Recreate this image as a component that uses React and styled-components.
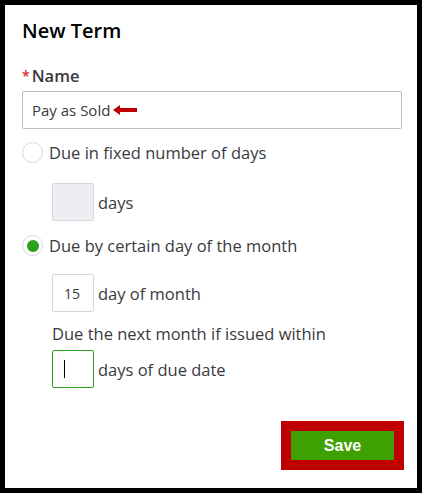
import React from 'react';
import styled, { createGlobalStyle } from 'styled-components';

const GlobalStyle = createGlobalStyle`
  html, body {
    margin: 0;
    padding: 0;
    background: #000;
  }
  body {
    font-family: "Open Sans", "Liberation Sans", sans-serif;
  }
`;

const Frame = styled.div`
  width: 422px;
  height: 493px;
  box-sizing: border-box;
  border: 5px solid #000;
  background: #fff;
  display: flex;
  flex-direction: column;
  padding: 14px 15px 18px 17px;
  color: #393a3d;
`;

const Title = styled.h2`
  margin: 0;
  font-size: 20px;
  font-weight: 600;
  color: #000;
  line-height: 24px;
`;

const Label = styled.div`
  margin-top: 23px;
  font-size: 16.5px;
  font-weight: 600;
  color: #393a3d;
  line-height: 20px;
  display: flex;
  align-items: center;
  span {
    color: #d52b1e;
    margin-right: 2px;
    font-size: 14px;
  }
`;

const NameField = styled.div`
  margin-top: 5px;
  height: 38px;
  box-sizing: border-box;
  border: 1px solid #babec5;
  border-radius: 2px;
  display: flex;
  align-items: center;
  padding: 0 9px;
  font-size: 15px;
  color: #393a3d;
  gap: 3px;
`;

const RadioRow = styled.label`
  display: flex;
  align-items: center;
  gap: 6px;
  margin-top: ${(p) => p.top}px;
  font-size: 16.5px;
  line-height: 21px;
  font-weight: 500;
  color: #393a3d;
`;

const Radio = styled.span`
  width: 21px;
  height: 21px;
  box-sizing: border-box;
  border-radius: 50%;
  border: 1px solid #d4d7dc;
  background: #fff;
  display: flex;
  align-items: center;
  justify-content: center;
  flex-shrink: 0;
  &::after {
    content: '';
    display: ${(p) => (p.checked ? 'block' : 'none')};
    width: 12px;
    height: 12px;
    border-radius: 50%;
    background: #2ca01c;
  }
`;

const Indent = styled.div`
  padding-left: 30px;
  margin-top: ${(p) => p.top}px;
`;

const FieldRow = styled.div`
  display: flex;
  align-items: center;
  gap: 4px;
  font-size: 16.5px;
  color: #393a3d;
`;

const SmallBox = styled.div`
  width: 42px;
  height: 38px;
  box-sizing: border-box;
  border: 1px solid ${(p) => (p.focus ? '#2ca01c' : '#d4d7dc')};
  border-radius: 2px;
  background: ${(p) => (p.disabled ? '#eceef1' : '#fff')};
  display: flex;
  align-items: center;
  padding-left: 11px;
  font-size: 14px;
  color: #393a3d;
`;

const SubLabel = styled.div`
  margin-top: 12px;
  margin-bottom: 6px;
  font-size: 16.5px;
  line-height: 20px;
  font-weight: 500;
  color: #393a3d;
`;

const Cursor = styled.span`
  display: block;
  width: 1px;
  height: 18px;
  background: #000;
`;

const Footer = styled.div`
  margin-top: auto;
  display: flex;
  justify-content: flex-end;
`;

const SaveButton = styled.button`
  width: 123px;
  height: 49px;
  box-sizing: border-box;
  border: 10px solid #c00000;
  background: #3fa004;
  color: #fff;
  font-family: "Liberation Sans", Arial, sans-serif;
  font-weight: 700;
  font-size: 16px;
  padding: 0;
  margin-right: -2px;
`;

const Arrow = () => (
  <svg width="24" height="10" viewBox="0 0 24 10">
    <polygon points="0,5 7,0 7,3 24,3 24,7 7,7 7,10" fill="#c00000" />
  </svg>
);

export default function App() {
  return (
    <>
      <GlobalStyle />
      <Frame>
        <Title>New Term</Title>
        <Label>
          <span>*</span>Name
        </Label>
        <NameField>
          Pay as Sold <Arrow />
        </NameField>
        <RadioRow top={13}>
          <Radio />
          Due in fixed number of days
        </RadioRow>
        <Indent top={20}>
          <FieldRow>
            <SmallBox disabled />
            days
          </FieldRow>
        </Indent>
        <RadioRow top={14}>
          <Radio checked />
          Due by certain day of the month
        </RadioRow>
        <Indent top={18}>
          <FieldRow>
            <SmallBox>15</SmallBox>
            day of month
          </FieldRow>
          <SubLabel>Due the next month if issued within</SubLabel>
          <FieldRow>
            <SmallBox focus>
              <Cursor />
            </SmallBox>
            days of due date
          </FieldRow>
        </Indent>
        <Footer>
          <SaveButton>Save</SaveButton>
        </Footer>
      </Frame>
    </>
  );
}
